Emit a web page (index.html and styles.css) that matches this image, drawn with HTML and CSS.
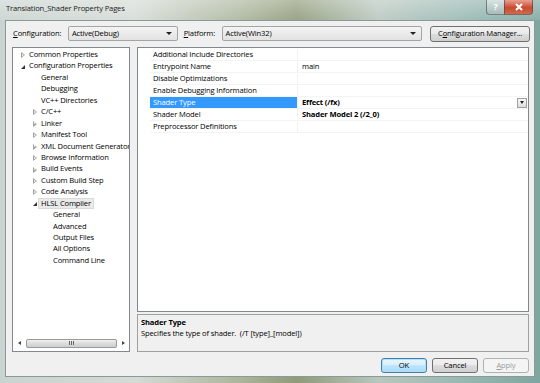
FILE: index.html
```html
<!DOCTYPE html>
<html lang="en">
<head>
    <meta charset="UTF-8">
    <title>Translation_Shader Property Pages</title>
    <link rel="stylesheet" href="styles.css">
</head>
<body>
    <div class="window">
        <div class="titlebar">
            <span class="title">Translation_Shader Property Pages</span>
            <div class="caption-btns">
                <span class="cap-help">?</span>
                <span class="cap-close">
                    <svg width="10" height="8" viewBox="0 0 10 8"><path d="M2 1 L8 7 M8 1 L2 7" stroke="#fff" stroke-width="2"/></svg>
                </span>
            </div>
        </div>
        <div class="client">
            <div class="toolbar">
                <span class="label lbl-config"><u>C</u>onfiguration:</span>
                <div class="combo combo-config"><span>Active(Debug)</span><i class="arrow"></i></div>
                <span class="label lbl-platform"><u>P</u>latform:</span>
                <div class="combo combo-platform"><span>Active(Win32)</span><i class="arrow"></i></div>
                <div class="btn btn-manager">C<u>o</u>nfiguration Manager...</div>
            </div>
            <div class="main">
                <div class="tree">
                    <ul class="tree-list">
                        <li class="lv0"><i class="tw closed"></i>Common Properties</li>
                        <li class="lv0"><i class="tw open"></i>Configuration Properties</li>
                        <li class="lv1"><i class="tw"></i>General</li>
                        <li class="lv1"><i class="tw"></i>Debugging</li>
                        <li class="lv1"><i class="tw"></i>VC++ Directories</li>
                        <li class="lv1"><i class="tw closed"></i>C/C++</li>
                        <li class="lv1"><i class="tw closed"></i>Linker</li>
                        <li class="lv1"><i class="tw closed"></i>Manifest Tool</li>
                        <li class="lv1"><i class="tw closed"></i>XML Document Generator</li>
                        <li class="lv1"><i class="tw closed"></i>Browse Information</li>
                        <li class="lv1"><i class="tw closed"></i>Build Events</li>
                        <li class="lv1"><i class="tw closed"></i>Custom Build Step</li>
                        <li class="lv1"><i class="tw closed"></i>Code Analysis</li>
                        <li class="lv1"><i class="tw open"></i><span class="sel">HLSL Compiler</span></li>
                        <li class="lv2">General</li>
                        <li class="lv2">Advanced</li>
                        <li class="lv2">Output Files</li>
                        <li class="lv2">All Options</li>
                        <li class="lv2">Command Line</li>
                    </ul>
                    <div class="hscroll">
                        <span class="sb-arrow left"></span>
                        <div class="sb-track"><div class="sb-thumb"><span class="grip"></span></div></div>
                        <span class="sb-arrow right"></span>
                    </div>
                </div>
                <div class="right">
                    <div class="grid">
                        <div class="row"><span class="name">Additional Include Directories</span><span class="value"></span></div>
                        <div class="row"><span class="name">Entrypoint Name</span><span class="value">main</span></div>
                        <div class="row"><span class="name">Disable Optimizations</span><span class="value"></span></div>
                        <div class="row"><span class="name">Enable Debugging Information</span><span class="value"></span></div>
                        <div class="row active"><span class="name">Shader Type</span><span class="value bold">Effect (/fx)</span><span class="drop"><i class="arrow"></i></span></div>
                        <div class="row"><span class="name">Shader Model</span><span class="value bold">Shader Model 2 (/2_0)</span></div>
                        <div class="row"><span class="name">Preprocessor Definitions</span><span class="value"></span></div>
                    </div>
                    <div class="desc">
                        <div class="desc-title">Shader Type</div>
                        <div class="desc-text">Specifies the type of shader.&nbsp; (/T [type]_[model])</div>
                    </div>
                </div>
            </div>
            <div class="buttons">
                <div class="btn btn-ok">OK</div>
                <div class="btn btn-cancel">Cancel</div>
                <div class="btn btn-apply disabled"><u>A</u>pply</div>
            </div>
        </div>
    </div>
</body>
</html>
```

FILE: styles.css
```css
html, body, ul, li {margin: 0; padding: 0;}
body {
    width: 540px;
    height: 383px;
    overflow: hidden;
    font: 7.6px/1.2 "Open Sans", "Noto Sans", sans-serif;
    letter-spacing: -0.15px;
    color: #000;
}

.window {
    height: 383px;
    display: flex;
    flex-direction: column;
    background: linear-gradient(90deg, #c9d3cf 0%, #d5dbd6 25%, #a9b49a 45%, #8f9a78 55%, #b8c7bf 70%, #8fb3ad 90%, #7fa5a0 100%);
}

/* title bar */
.titlebar {
    height: 20px;
    position: relative;
    background: linear-gradient(180deg, rgba(255,255,255,0.35), rgba(255,255,255,0.1));
}
.title {
    position: absolute;
    left: 6px;
    top: 4px;
    font-size: 7.6px;
    color: #1a1a1a;
}
.caption-btns {
    position: absolute;
    right: 7px;
    top: 0;
    display: flex;
}
.cap-help, .cap-close {
    height: 14px;
    display: flex;
    align-items: center;
    justify-content: center;
    border: 1px solid rgba(60,70,70,0.6);
    border-top: none;
}
.cap-help {
    width: 17px;
    background: linear-gradient(180deg, #d8e4e2, #a8bcba);
    color: #fff;
    font-weight: bold;
    font-size: 9px;
    border-radius: 0 0 0 4px;
    border-right: none;
}
.cap-close {
    width: 27px;
    background: linear-gradient(180deg, #e8a090, #c94a30 55%, #d06a4a);
    border-radius: 0 0 4px 0;
}

/* dialog client */
.client {
    flex: 1;
    margin: 0 5px 6px 5px;
    background: #f0f0f0;
    border: 1px solid #8a9a98;
    padding: 4px 4px 0 6px;
    display: flex;
    flex-direction: column;
}

.toolbar {
    height: 17px;
    display: flex;
    align-items: center;
}
.label {padding-left: 1px;}
.lbl-config {width: 55px;}
.lbl-platform {width: 38px; margin-left: 5px;}

.combo {
    height: 15px;
    border: 1px solid #a4a4a4;
    border-radius: 2px;
    background: linear-gradient(180deg, #f4f4f4, #e2e2e2);
    display: flex;
    align-items: center;
    padding-left: 3px;
    box-sizing: border-box;
}
.combo span {flex: 1;}
.combo-config {width: 110px;}
.combo-platform {width: 201px;}
.arrow {
    width: 0;
    height: 0;
    border-left: 3px solid transparent;
    border-right: 3px solid transparent;
    border-top: 3px solid #222;
    margin-right: 5px;
}

.btn {
    height: 16px;
    box-sizing: border-box;
    border: 1px solid #707070;
    border-radius: 3px;
    background: linear-gradient(180deg, #f2f2f2 0%, #ebebeb 45%, #dddddd 50%, #cfcfcf 100%);
    display: flex;
    align-items: center;
    justify-content: center;
}
.btn-manager {width: 100px; margin-left: 8px;}

/* main panes */
.main {
    display: flex;
    gap: 7px;
    margin-top: 5px;
    height: 305px;
}
.tree {
    width: 118px;
    background: #fff;
    border: 1px solid #828790;
    box-sizing: border-box;
    display: flex;
    flex-direction: column;
}
.tree-list {
    list-style: none;
    flex: 1;
    padding-top: 1px;
    white-space: nowrap;
    overflow: hidden;
}
.tree-list li {
    height: 11.45px;
    line-height: 11.45px;
    display: flex;
    align-items: center;
}
.lv0 {padding-left: 5px;}
.lv1 {padding-left: 17px;}
.lv2 {padding-left: 40px;}
.tw {
    width: 11px;
    height: 11px;
    flex: none;
    position: relative;
}
.tw.closed::before {
    content: "";
    position: absolute;
    left: 3px;
    top: 3px;
    border-left: 4px solid #a0a0a0;
    border-top: 3px solid transparent;
    border-bottom: 3px solid transparent;
}
.tw.closed::after {
    content: "";
    position: absolute;
    left: 4px;
    top: 4.5px;
    border-left: 2px solid #fff;
    border-top: 1.5px solid transparent;
    border-bottom: 1.5px solid transparent;
}
.tw.open::before {
    content: "";
    position: absolute;
    left: 3px;
    top: 4px;
    border-right: 4px solid #333;
    border-top: 4px solid transparent;
}
.sel {
    background: #eaeaea;
    border: 1px solid #dadada;
    padding: 0 2px;
    margin-left: -3px;
    line-height: 9px;
}

.hscroll {
    height: 10px;
    margin: 0 1px 3px 1px;
    display: flex;
    align-items: center;
}
.sb-arrow {
    width: 12px;
    height: 10px;
    position: relative;
}
.sb-arrow.left::before, .sb-arrow.right::before {
    content: "";
    position: absolute;
    top: 3px;
    border-top: 2px solid transparent;
    border-bottom: 2px solid transparent;
}
.sb-arrow.left::before {left: 4px; border-right: 3px solid #444;}
.sb-arrow.right::before {left: 5px; border-left: 3px solid #444;}
.sb-track {flex: 1; height: 9px; background: #f4f4f4;}
.sb-thumb {
    height: 9px;
    width: 91px;
    box-sizing: border-box;
    border: 1px solid #9a9a9a;
    border-radius: 2px;
    background: linear-gradient(180deg, #f0f0f0, #dcdcdc 50%, #cdcdcd);
    display: flex;
    align-items: center;
    justify-content: center;
}
.grip {
    width: 5px;
    height: 4px;
    background: repeating-linear-gradient(90deg, #666 0 1px, transparent 1px 2px);
}

.right {
    flex: 1;
    display: flex;
    flex-direction: column;
    gap: 2px;
    margin-right: 1px;
}
.grid {
    height: 265px;
    box-sizing: border-box;
    background: #fff;
    border: 1px solid #828790;
    padding: 1px 0 0 12px;
}
.row {
    height: 12.07px;
    display: flex;
    align-items: center;
    border-bottom: 1px solid #f4f4f4;
    box-sizing: border-box;
}
.name {
    width: 148px;
    padding-left: 3px;
    box-sizing: border-box;
    border-right: 1px solid #f2f2f2;
    height: 100%;
    display: flex;
    align-items: center;
}
.value {
    flex: 1;
    padding-left: 4px;
}
.bold {font-weight: bold;}
.row.active .name {background: #3399ff; color: #fff;}
.drop {
    width: 10px;
    height: 10px;
    box-sizing: border-box;
    border: 1px solid #a0a0a0;
    background: linear-gradient(180deg, #f8f8f8, #dedede);
    margin-right: 1px;
    display: flex;
    align-items: center;
    justify-content: center;
}
.drop .arrow {margin: 0; border-width: 3px 2.5px 0 2.5px;}

.desc {
    height: 38px;
    box-sizing: border-box;
    border: 1px solid #a0a0a0;
    background: #f0f0f0;
    padding: 2px 3px;
}
.desc-title {font-weight: bold; line-height: 11px;}
.desc-text {line-height: 11px;}

.buttons {
    display: flex;
    justify-content: flex-end;
    gap: 5px;
    margin-top: 6px;
    padding-right: 1px;
}
.buttons .btn {width: 46px; height: 15px;}
.btn-ok {
    border-color: #3c7fb1;
    background: linear-gradient(180deg, #eaf6fd 0%, #d9f0fc 45%, #bee6fd 50%, #a7d9f5 100%);
    box-shadow: inset 0 0 0 1px #b4dff7;
}
.btn.disabled {
    color: #9c9c9c;
    border-color: #adb2b5;
    background: #f4f4f4;
}
```
